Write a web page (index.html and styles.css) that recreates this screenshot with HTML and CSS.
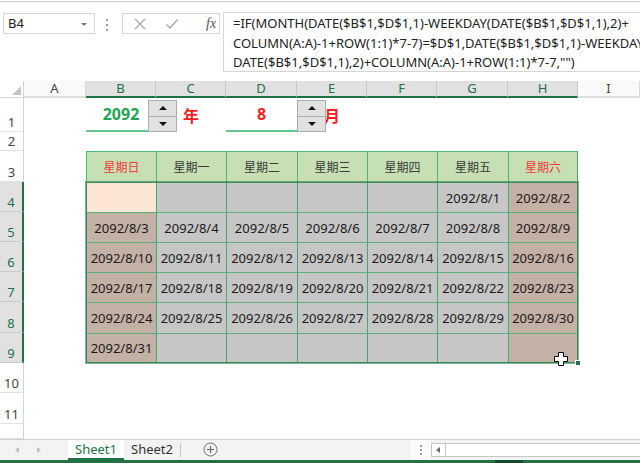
FILE: index.html
```html
<!DOCTYPE html>
<html>
<head>
  <meta charset="utf-8">
  <title>万年历</title>
  <link rel="stylesheet" href="styles.css">
</head>
<body>
<div class="app">
  <div class="topline"></div>
  <div class="fbar">
    <div class="namebox">B4<span class="drop"></span></div>
    <div class="grip"><i></i><i></i><i></i></div>
    <div class="fbtns">
      <svg class="ico" width="14" height="14" viewBox="0 0 14 14"><path d="M2 2L12 12M12 2L2 12" stroke="#a8a8a8" stroke-width="1.2" fill="none"/></svg>
      <svg class="ico" width="14" height="14" viewBox="0 0 14 14"><path d="M1.5 7.5L5 11L12.5 2.5" stroke="#a8a8a8" stroke-width="1.4" fill="none"/></svg>
      <span class="fx">fx</span>
    </div>
    <div class="formula">
      <div>=IF(MONTH(DATE($B$1,$D$1,1)-WEEKDAY(DATE($B$1,$D$1,1),2)+</div>
      <div>COLUMN(A:A)-1+ROW(1:1)*7-7)=$D$1,DATE($B$1,$D$1,1)-WEEKDAY(</div>
      <div>DATE($B$1,$D$1,1),2)+COLUMN(A:A)-1+ROW(1:1)*7-7,"")</div>
    </div>
  </div>

  <div class="sheet">
    <!-- column headers -->
    <div class="corner"><span class="tri"></span></div>
    <div class="ch">A</div>
    <div class="ch sel">B</div>
    <div class="ch sel">C</div>
    <div class="ch sel">D</div>
    <div class="ch sel">E</div>
    <div class="ch sel">F</div>
    <div class="ch sel">G</div>
    <div class="ch sel">H</div>
    <div class="ch">I</div>

    <!-- row 1 -->
    <div class="rh">1</div>
    <div class="c"></div>
    <div class="c input green">2092</div>
    <div class="c big">年</div>
    <div class="c input red">8</div>
    <div class="c big">月</div>
    <div class="c"></div><div class="c"></div><div class="c"></div><div class="c"></div>

    <!-- row 2 -->
    <div class="rh">2</div>
    <div class="c"></div><div class="c"></div><div class="c"></div><div class="c"></div><div class="c"></div>
    <div class="c"></div><div class="c"></div><div class="c"></div><div class="c"></div>

    <!-- row 3 -->
    <div class="rh">3</div>
    <div class="c"></div>
    <div class="th red-t">星期日</div>
    <div class="th">星期一</div>
    <div class="th">星期二</div>
    <div class="th">星期三</div>
    <div class="th">星期四</div>
    <div class="th">星期五</div>
    <div class="th red-t last">星期六</div>
    <div class="c"></div>

    <!-- row 4 -->
    <div class="rh sel">4</div>
    <div class="c"></div>
    <div class="d act"></div>
    <div class="d"></div>
    <div class="d"></div>
    <div class="d"></div>
    <div class="d"></div>
    <div class="d">2092/8/1</div>
    <div class="d we last">2092/8/2</div>
    <div class="c"></div>

    <!-- row 5 -->
    <div class="rh sel">5</div>
    <div class="c"></div>
    <div class="d we">2092/8/3</div>
    <div class="d">2092/8/4</div>
    <div class="d">2092/8/5</div>
    <div class="d">2092/8/6</div>
    <div class="d">2092/8/7</div>
    <div class="d">2092/8/8</div>
    <div class="d we last">2092/8/9</div>
    <div class="c"></div>

    <!-- row 6 -->
    <div class="rh sel">6</div>
    <div class="c"></div>
    <div class="d we">2092/8/10</div>
    <div class="d">2092/8/11</div>
    <div class="d">2092/8/12</div>
    <div class="d">2092/8/13</div>
    <div class="d">2092/8/14</div>
    <div class="d">2092/8/15</div>
    <div class="d we last">2092/8/16</div>
    <div class="c"></div>

    <!-- row 7 -->
    <div class="rh sel">7</div>
    <div class="c"></div>
    <div class="d we">2092/8/17</div>
    <div class="d">2092/8/18</div>
    <div class="d">2092/8/19</div>
    <div class="d">2092/8/20</div>
    <div class="d">2092/8/21</div>
    <div class="d">2092/8/22</div>
    <div class="d we last">2092/8/23</div>
    <div class="c"></div>

    <!-- row 8 -->
    <div class="rh sel">8</div>
    <div class="c"></div>
    <div class="d we">2092/8/24</div>
    <div class="d">2092/8/25</div>
    <div class="d">2092/8/26</div>
    <div class="d">2092/8/27</div>
    <div class="d">2092/8/28</div>
    <div class="d">2092/8/29</div>
    <div class="d we last">2092/8/30</div>
    <div class="c"></div>

    <!-- row 9 -->
    <div class="rh sel">9</div>
    <div class="c"></div>
    <div class="d we bot">2092/8/31</div>
    <div class="d bot"></div>
    <div class="d bot"></div>
    <div class="d bot"></div>
    <div class="d bot"></div>
    <div class="d bot"></div>
    <div class="d we bot last"></div>
    <div class="c"></div>

    <!-- rows 10 - 12 -->
    <div class="rh">10</div>
    <div class="c"></div><div class="c"></div><div class="c"></div><div class="c"></div><div class="c"></div>
    <div class="c"></div><div class="c"></div><div class="c"></div><div class="c"></div>
    <div class="rh">11</div>
    <div class="c"></div><div class="c"></div><div class="c"></div><div class="c"></div><div class="c"></div>
    <div class="c"></div><div class="c"></div><div class="c"></div><div class="c"></div>
    <div class="rh"></div>
    <div class="c"></div><div class="c"></div><div class="c"></div><div class="c"></div><div class="c"></div>
    <div class="c"></div><div class="c"></div><div class="c"></div><div class="c"></div>

    <!-- spin buttons, selection and cursor lie over the cells -->
    <div class="spin spin-year"><span class="up"></span><span class="down"></span></div>
    <div class="spin spin-month"><span class="up"></span><span class="down"></span></div>
    <div class="selection"></div>
    <div class="handle"></div>
    <svg class="cursor" width="14" height="14" viewBox="0 0 14 14">
      <path d="M4.5 0.5H9.5V4.5H13.5V9.5H9.5V13.5H4.5V9.5H0.5V4.5H4.5Z" fill="#fff" stroke="#000" stroke-width="1"/>
    </svg>
  </div>

  <div class="tabs">
    <div class="nav"><span class="tl"></span><span class="tr"></span></div>
    <div class="tab active">Sheet1</div>
    <div class="tab">Sheet2</div>
    <div class="sep"></div>
    <div class="add">
      <svg width="15" height="15" viewBox="0 0 15 15"><circle cx="7.5" cy="7.5" r="6.5" fill="none" stroke="#777" stroke-width="1"/><path d="M7.5 4V11M4 7.5H11" stroke="#666" stroke-width="1.2"/></svg>
    </div>
    <div class="fill"></div>
    <div class="hgrip"><i></i><i></i><i></i></div>
    <div class="hscroll"><span class="sl"></span></div>
    <div class="track"></div>
  </div>
  <div class="status"><span class="mark"></span></div>
</div>
</body>
</html>
```

FILE: styles.css
```css
* { box-sizing: border-box; }
body {
  margin: 0;
  background: #fff;
  font-family: "Noto Sans", "Noto Sans CJK SC", sans-serif;
  color: #222;
  overflow: hidden;
}
.app { width: 640px; height: 463px; overflow: hidden; }

.topline { height: 1px; margin-top: 1px; background: #c8c8c8; }

/* formula bar */
.fbar {
  height: 79px;
  display: flex;
  align-items: flex-start;
  padding-left: 3px;
}
.fbar > * { flex-shrink: 0; }
.namebox {
  position: relative;
  width: 92px;
  height: 21px;
  margin-top: 11px;
  border: 1px solid #d6d6d6;
  font-size: 13px;
  line-height: 19px;
  padding-left: 4px;
}
.drop {
  position: absolute;
  right: 7px;
  top: 9px;
  border-left: 3px solid transparent;
  border-right: 3px solid transparent;
  border-top: 3px solid #777;
}
.grip {
  width: 27px;
  margin-top: 17px;
  display: flex;
  flex-direction: column;
  align-items: center;
  gap: 3px;
  padding-right: 3px;
}
.grip i, .hgrip i { display: block; width: 2px; height: 2px; background: #9a9a9a; }
.fbtns {
  width: 98px;
  height: 21px;
  margin-top: 11px;
  border: 1px solid #d6d6d6;
  display: flex;
  align-items: center;
  padding-left: 10px;
}
.fbtns .ico { margin-right: 18px; }
.fbtns .fx {
  margin-left: 9px;
  font-family: "Liberation Serif", serif;
  font-style: italic;
  font-size: 14px;
  color: #555;
}
.formula {
  width: 440px;
  height: 60px;
  margin-top: 10px;
  margin-left: 3px;
  border: 1px solid #d6d6d6;
  padding: 1px 0 0 9px;
  font-size: 13px;
  line-height: 19.5px;
  white-space: nowrap;
  overflow: hidden;
}

/* sheet grid */
.sheet {
  position: relative;
  display: grid;
  grid-template-columns: 24px 62px 70px 70px 71px 70px 70px 71px 70px 62px;
  grid-template-rows: 17px 34px 19px 31px 30px 30px 30px 30px 31px 30px 30px 31px 15px;
  font-size: 13px;
}
.corner {
  position: relative;
  border-right: 1px solid #d4d4d4;
  border-bottom: 1px solid #d4d4d4;
}
.tri {
  position: absolute;
  right: 2px;
  bottom: 2px;
  border-left: 9px solid transparent;
  border-bottom: 9px solid #c4c4c4;
}
.ch {
  display: flex;
  align-items: center;
  justify-content: center;
  background: #fafafa;
  color: #444;
  border-right: 1px solid #d9d9d9;
  border-bottom: 2px solid #e0e0e0;
  line-height: 15px;
}
.ch.sel {
  background: #e1e1e1;
  color: #217346;
  border-right-color: #c8c8c8;
  border-bottom-color: #217346;
}
.rh {
  display: flex;
  align-items: flex-end;
  justify-content: center;
  padding-bottom: 1px;
  line-height: 16px;
  color: #444;
  border-right: 1px solid #d4d4d4;
  border-bottom: 1px solid #e1e1e1;
}
.rh.sel {
  background: #e1e1e1;
  color: #217346;
  border-right: 2px solid #217346;
  border-bottom-color: #cacaca;
}
.c {
  display: flex;
  align-items: center;
  justify-content: center;
}
.input {
  border-bottom: 2px solid #62c98d;
  font-size: 16px;
  font-weight: bold;
}
.green { color: #1ea653; }
.red { color: #fa1e1e; }
.big {
  font-size: 16px;
  font-weight: bold;
  color: #fa1e1e;
}

/* calendar table */
.th, .d {
  display: flex;
  align-items: center;
  justify-content: center;
  border-left: 1px solid #48a86a;
  border-top: 1px solid #5bb07b;
}
.th {
  background: #c6e0b4;
  border-top-color: #43c078;
  border-left-color: #52b272;
  color: #3a3a3a;
  font-size: 12px;
}
.th:nth-child(10n+3) { border-left-color: #43c078; }
.red-t { color: #f23a3a; }
.d { background: #c6c6c6; color: #1a1a1a; }
.d.we { background: #c4b1a6; }
.d.act { background: #fde5d6; }
.last { border-right: 1px solid #48a86a; }
.bot { border-bottom: 1px solid #48a86a; }

/* overlays */
.spin {
  position: absolute;
  top: 19px;
  width: 29px;
  height: 32px;
  border: 1px solid #adadad;
  background: #e1e1e1;
  display: flex;
  flex-direction: column;
}
.spin-year { left: 148px; }
.spin-month { left: 297px; }
.spin span {
  flex: 1;
  display: flex;
  align-items: center;
  justify-content: center;
}
.spin .up { border-bottom: 1px solid #adadad; }
.spin .up::after {
  content: "";
  border-left: 4px solid transparent;
  border-right: 4px solid transparent;
  border-bottom: 4px solid #111;
}
.spin .down::after {
  content: "";
  border-left: 4px solid transparent;
  border-right: 4px solid transparent;
  border-top: 4px solid #111;
}
.selection {
  position: absolute;
  left: 85px;
  top: 100px;
  width: 494px;
  height: 183px;
  border: 2px solid rgba(33, 115, 70, 0.55);
  pointer-events: none;
}
.handle {
  position: absolute;
  left: 575px;
  top: 279px;
  width: 6px;
  height: 6px;
  background: #217346;
  border: 1px solid #fff;
}
.cursor {
  position: absolute;
  left: 554px;
  top: 271px;
}

/* sheet tabs */
.tabs {
  height: 21px;
  border-top: 1px solid #cfcfcf;
  background: #f3f3f3;
  display: flex;
  align-items: stretch;
  font-size: 13px;
}
.tabs > * { flex-shrink: 0; }
.nav {
  width: 68px;
  position: relative;
}
.tl, .tr, .sl {
  position: absolute;
  top: 7px;
  border-top: 3px solid transparent;
  border-bottom: 3px solid transparent;
}
.tl { left: 15px; border-right: 4px solid #c2c2c2; }
.tr { left: 37px; border-left: 4px solid #c2c2c2; }
.tab {
  width: 56px;
  display: flex;
  align-items: center;
  justify-content: center;
  padding-bottom: 3px;
  color: #333;
}
.tab.active {
  background: #fff;
  color: #217346;
  border-bottom: 2px solid #217346;
  padding-bottom: 1px;
}
.sep {
  width: 1px;
  margin: 3px 0 3px 0;
  background: #c8c8c8;
}
.add {
  margin-left: 22px;
  display: flex;
  align-items: center;
  padding-bottom: 1px;
}
.tabs .fill { flex: 1 1 auto; }
.hgrip {
  width: 21px;
  background: #fafafa;
  display: flex;
  flex-direction: column;
  align-items: center;
  justify-content: center;
  gap: 2px;
}
.hscroll {
  position: relative;
  width: 15px;
  margin: 3px 0;
  border: 1px solid #c6c6c6;
  background: #fff;
}
.sl { left: 4px; top: 3px; border-right: 4px solid #666; }
.track {
  width: 200px;
  margin: 3px -6px 3px 0;
  border: 1px solid #c6c6c6;
  border-left: none;
  background: #fff;
}
.status {
  position: relative;
  height: 3px;
  background: #217346;
}
.mark {
  position: absolute;
  left: 495px;
  top: 0;
  width: 28px;
  height: 3px;
  background: #0f4d2b;
}
```
